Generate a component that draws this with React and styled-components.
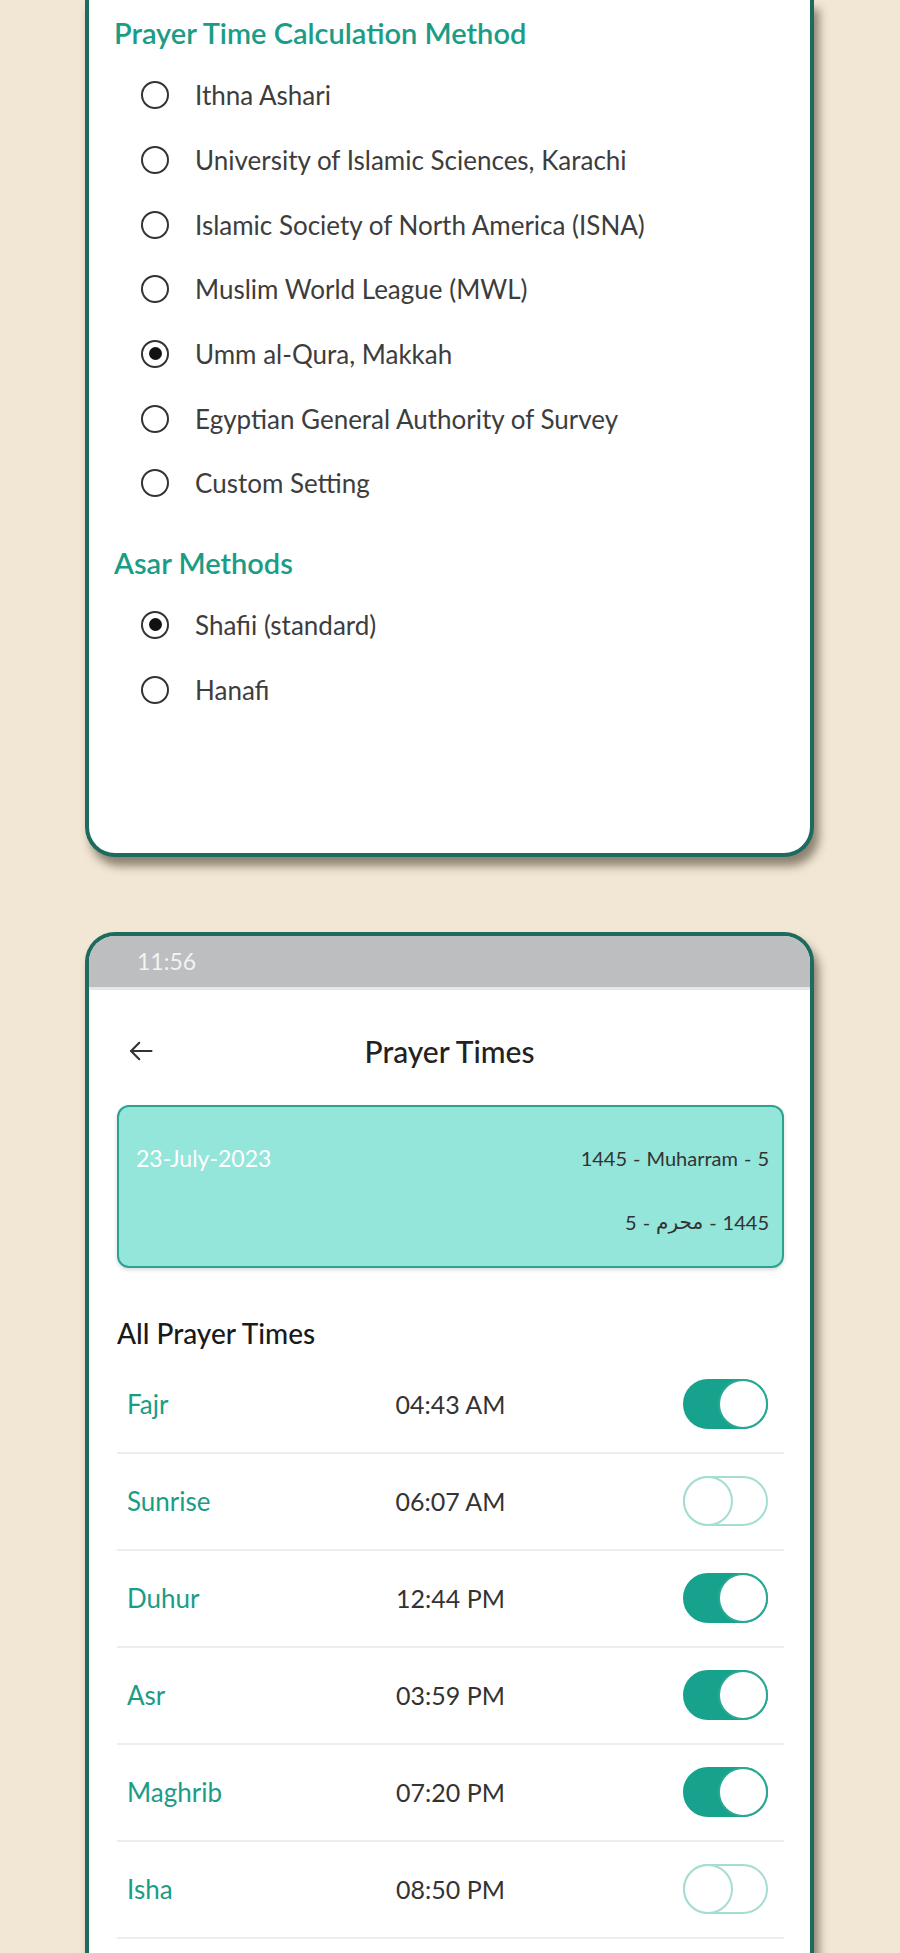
import React from "react";
import styled, { createGlobalStyle } from "styled-components";

const GlobalStyle = createGlobalStyle`
  html, body { margin: 0; padding: 0; }
  body {
    background: #f2e7d4;
    font-family: Lato, "DejaVu Sans", sans-serif;
    overflow: hidden;
  }
`;

const Page = styled.div`
  display: flex;
  flex-direction: column;
  padding: 0 86px 0 85px;
  height: 1953px;
  overflow: hidden;
`;

const SettingsCard = styled.section`
  background: #fff;
  border: 4px solid #1c6b5e;
  border-top: none;
  border-radius: 0 0 30px 30px;
  box-shadow: 5px 9px 10px rgba(40, 30, 15, 0.5);
  padding: 15px 25px 131px;
  display: flex;
  flex-direction: column;
`;

const SectionTitle = styled.h2`
  margin: ${(p) => (p.$first ? "0" : "29px")} 0 0;
  font-size: 29px;
  line-height: 36px;
  font-weight: 600;
  color: #1b9c86;
`;

const OptionList = styled.div`
  display: flex;
  flex-direction: column;
  margin-top: 12px;
`;

const Option = styled.label`
  display: flex;
  align-items: center;
  gap: 26px;
  height: 64.67px;
  padding-left: 27px;
  font-size: 26px;
  color: #3d3d3d;
`;

const RadioCircle = styled.span`
  width: 28px;
  height: 28px;
  box-sizing: border-box;
  border: 2.5px solid #333;
  border-radius: 50%;
  display: flex;
  align-items: center;
  justify-content: center;
  flex-shrink: 0;
`;

const RadioDot = styled.span`
  width: 13px;
  height: 13px;
  border-radius: 50%;
  background: #111;
`;

const TimesCard = styled.section`
  margin-top: 75px;
  background: #fff;
  border: 4px solid #1c6b5e;
  border-bottom: none;
  border-radius: 30px 30px 0 0;
  box-shadow: 5px 9px 10px rgba(40, 30, 15, 0.5);
  overflow: hidden;
  padding-bottom: 300px;
`;

const StatusBar = styled.div`
  height: 51px;
  background: #bdbec0;
  border-bottom: 3px solid #e7e7e8;
  display: flex;
  align-items: center;
  padding-left: 48px;
  font-size: 23px;
  color: #f3f3f3;
`;

const AppBar = styled.header`
  display: grid;
  grid-template-columns: 1fr auto 1fr;
  align-items: center;
  height: 42px;
  margin-top: 40px;
  padding: 0 38px;
`;

const BackButton = styled.button`
  justify-self: start;
  background: none;
  border: none;
  padding: 0;
  display: flex;
  color: #333;
`;

const Title = styled.h1`
  margin: 0;
  font-size: 30px;
  font-weight: 500;
  color: #222;
`;

const Content = styled.div`
  padding: 0 26px 0 28px;
`;

const DateCard = styled.div`
  margin-top: 33px;
  height: 163px;
  box-sizing: border-box;
  background: #94e5da;
  border: 2px solid #2aa48f;
  border-radius: 12px;
  box-shadow: 0 2px 4px rgba(0, 0, 0, 0.15);
  padding: 36px 13px 0 17px;
  display: flex;
  flex-direction: column;
  gap: 34px;
`;

const DateRow = styled.div`
  display: flex;
  justify-content: ${(p) => (p.$end ? "flex-end" : "space-between")};
  align-items: center;
  height: 30px;
`;

const GregorianDate = styled.span`
  font-size: 23px;
  color: #fff;
`;

const HijriDate = styled.span`
  font-size: 20px;
  color: #333;
  display: flex;
  gap: 6px;
  align-items: center;
`;

const ListTitle = styled.h3`
  margin: 48px 0 0;
  font-size: 28px;
  line-height: 34px;
  font-weight: 500;
  color: #1a1a1a;
`;

const PrayerList = styled.div`
  display: flex;
  flex-direction: column;
  margin-top: 7px;
`;

const PrayerRow = styled.div`
  display: grid;
  grid-template-columns: 1fr auto 1fr;
  align-items: center;
  height: 95px;
  border-bottom: 2px solid #ededed;
  padding: 0 10px;
`;

const PrayerName = styled.span`
  font-size: 26px;
  color: #1b9c86;
`;

const PrayerTime = styled.span`
  font-size: 25px;
  color: #333;
`;

const Toggle = styled.span`
  justify-self: end;
  margin-right: 6px;
  position: relative;
  width: 85px;
  height: 50px;
  box-sizing: border-box;
  border-radius: 25px;
  background: ${(p) => (p.$on ? "#16a28c" : "#fff")};
  border: 2px solid ${(p) => (p.$on ? "#16a28c" : "#a6ddd3")};
`;

const Thumb = styled.span`
  position: absolute;
  top: -2px;
  ${(p) => (p.$on ? "right: -2px;" : "left: -2px;")}
  width: 50px;
  height: 50px;
  box-sizing: border-box;
  border-radius: 50%;
  background: #fff;
  border: 2px solid ${(p) => (p.$on ? "#2aa893" : "#a6ddd3")};
`;

const methods = [
  "Ithna Ashari",
  "University of Islamic Sciences, Karachi",
  "Islamic Society of North America (ISNA)",
  "Muslim World League (MWL)",
  "Umm al-Qura, Makkah",
  "Egyptian General Authority of Survey",
  "Custom Setting",
];

const asar = ["Shafii (standard)", "Hanafi"];

const prayers = [
  { name: "Fajr", time: "04:43 AM", on: true },
  { name: "Sunrise", time: "06:07 AM", on: false },
  { name: "Duhur", time: "12:44 PM", on: true },
  { name: "Asr", time: "03:59 PM", on: true },
  { name: "Maghrib", time: "07:20 PM", on: true },
  { name: "Isha", time: "08:50 PM", on: false },
];

function Radio({ label, checked }) {
  return (
    <Option>
      <RadioCircle>{checked && <RadioDot />}</RadioCircle>
      {label}
    </Option>
  );
}

function BackArrow() {
  return (
    <svg width="28" height="28" viewBox="0 0 24 24" fill="none" stroke="currentColor" strokeWidth="1.8" strokeLinecap="round" strokeLinejoin="round">
      <path d="M21 12H3.5" />
      <path d="M10.5 5L3.5 12l7 7" />
    </svg>
  );
}

export default function App() {
  return (
    <>
      <GlobalStyle />
      <Page>
        <SettingsCard>
          <SectionTitle $first>Prayer Time Calculation Method</SectionTitle>
          <OptionList>
            {methods.map((m, i) => (
              <Radio key={m} label={m} checked={i === 4} />
            ))}
          </OptionList>
          <SectionTitle>Asar Methods</SectionTitle>
          <OptionList>
            {asar.map((m, i) => (
              <Radio key={m} label={m} checked={i === 0} />
            ))}
          </OptionList>
        </SettingsCard>

        <TimesCard>
          <StatusBar>11:56</StatusBar>
          <AppBar>
            <BackButton aria-label="Back">
              <BackArrow />
            </BackButton>
            <Title>Prayer Times</Title>
            <span />
          </AppBar>
          <Content>
            <DateCard>
              <DateRow>
                <GregorianDate>23-July-2023</GregorianDate>
                <HijriDate>
                  <span>1445</span>
                  <span>-</span>
                  <span>Muharram</span>
                  <span>-</span>
                  <span>5</span>
                </HijriDate>
              </DateRow>
              <DateRow $end>
                <HijriDate>
                  <span>5</span>
                  <span>-</span>
                  <span dir="rtl">محرم</span>
                  <span>-</span>
                  <span>1445</span>
                </HijriDate>
              </DateRow>
            </DateCard>
            <ListTitle>All Prayer Times</ListTitle>
            <PrayerList>
              {prayers.map((p) => (
                <PrayerRow key={p.name}>
                  <PrayerName>{p.name}</PrayerName>
                  <PrayerTime>{p.time}</PrayerTime>
                  <Toggle $on={p.on}>
                    <Thumb $on={p.on} />
                  </Toggle>
                </PrayerRow>
              ))}
            </PrayerList>
          </Content>
        </TimesCard>
      </Page>
    </>
  );
}
